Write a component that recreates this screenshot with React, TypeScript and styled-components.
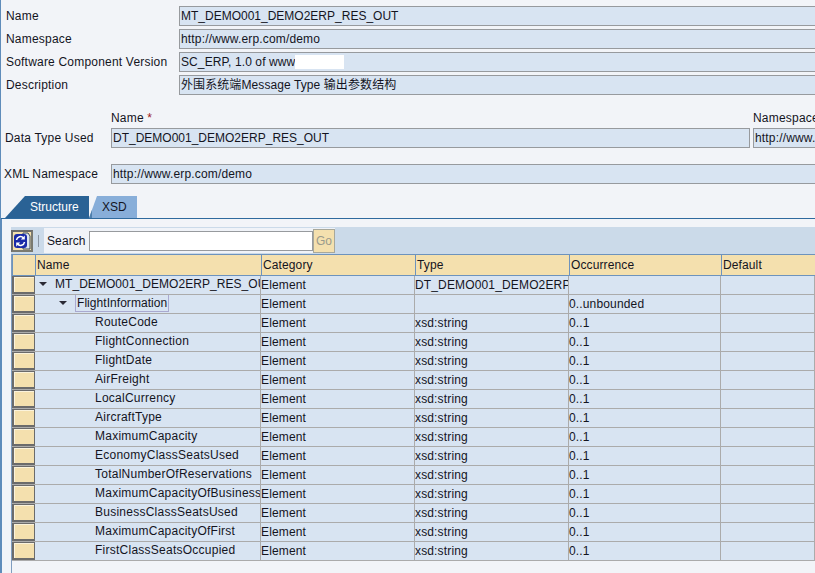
import React from "react";
import styled, { createGlobalStyle } from "styled-components";

const Global = createGlobalStyle`
  html, body { margin: 0; padding: 0; background: #f2f4f8; overflow: hidden; }
  body { font-family: "Liberation Sans", Arial, "Noto Sans CJK SC", sans-serif; font-size: 12px; color: #14141e; }
`;
const Page = styled.div`
  width: 815px; height: 573px; overflow: hidden; box-sizing: border-box;
  border-left: 1px solid #5f8cba; background: #f2f4f8;
`;
const Form = styled.section`
  display: flex; flex-direction: column; padding-top: 6px; gap: 3px;
`;
const Row = styled.div<{ $label: number }>`
  display: grid; grid-template-columns: ${(p) => p.$label}px 1fr; align-items: center; height: 20px;
`;
const Label = styled.div<{ $pad?: number }>`
  padding-left: ${(p) => p.$pad ?? 5}px; letter-spacing: 0.2px; white-space: nowrap;
`;
const Field = styled.div<{ $w?: number; $track?: number }>`
  box-sizing: border-box; height: 20px; line-height: 18px; padding-left: 1px;
  border: 1px solid #979a9e; border-right: ${(p) => (p.$w ? "1px solid #979a9e" : "none")};
  width: ${(p) => (p.$w ? `${p.$w}px` : "auto")}; flex: none;
  background: #d8e4f2; letter-spacing: ${(p) => p.$track ?? 0}px; white-space: nowrap; overflow: hidden;
`;
const Masked = styled.span`
  display: inline-block; width: 49px; height: 14px; background: #fff; vertical-align: middle; margin-top: -2px;
`;
const Heads = styled.div`
  display: grid; grid-template-columns: 642px 1fr; height: 20px; margin-top: 13px; padding-left: 110px; align-items: center;
`;
const HeadText = styled.div`
  letter-spacing: 0.2px; white-space: nowrap;
`;
const Star = styled.span`color: #a02020;`;
const UsedFields = styled.div`
  display: flex; gap: 3px; overflow: hidden;
`;
const XmlRow = styled(Row)`margin-top: 16px;`;
const Strip = styled.nav`
  display: flex; height: 22px; margin-top: 12px; padding-left: 4px; border-bottom: 1px solid #2f6a9e;
`;
const Tab = styled.div<{ $active?: boolean }>`
  box-sizing: border-box; height: 22px; display: flex; align-items: center;
  ${(p) =>
    p.$active
      ? `width: 84px; padding-left: 25px; background: #2a6295; color: #fff; clip-path: polygon(0 100%, 20px 0, 100% 0, 100% 100%);`
      : `width: 48px; padding-left: 13px; color: #14141e;
         background: linear-gradient(#4f80ad, #4f80ad) no-repeat left bottom / 3px 9px, #88aed9;
         clip-path: polygon(0 100%, 8px 0, 100% 0, 100% 100%);`}
`;
const Panel = styled.section`
  border-left: 1px solid #5f8cba; padding: 8px 0 0 9px;
`;
const Toolbar = styled.div`
  height: 27px; box-sizing: border-box; background: #cbdae9; display: flex; align-items: center;
`;
const IconButton = styled.button`
  box-sizing: border-box; width: 22px; height: 22px; padding: 0; margin: 0; display: flex; align-items: center; justify-content: center;
  background: #f4e0ae; border: 2px solid #6b6b6b; border-right-color: #7a7a70; border-bottom-color: #7a7a70;
`;
const Sep = styled.div`
  width: 1px; height: 12px; background: #8a96a4; margin: 0 5px;
`;
const SearchBox = styled.div`
  display: flex; align-items: center; height: 25px; background: #f0f3f8; padding-left: 3px;
`;
const SearchLabel = styled.span`
  letter-spacing: 0.1px; width: 42px;
`;
const SearchInput = styled.div`
  box-sizing: border-box; width: 224px; height: 20px; background: #fff; border: 1px solid #979a9e;
`;
const GoButton = styled.button`
  box-sizing: border-box; width: 22px; height: 24px; padding: 0; background: #f4e0ae; border: 1px solid #a8a89a;
  color: #9a9a8c; font: 12px "Liberation Sans", Arial, sans-serif;
`;
const columns = "23px 226px 154px 154px 152px 94px";
const TableGrid = styled.div`
  border-left: 1px solid #7f9dbf; display: flex; flex-direction: column; height: 320px;
`;
const HeaderRow = styled.div`
  display: grid; grid-template-columns: ${columns}; height: 22px; flex: none; box-sizing: border-box; border-bottom: 1px solid #6d93bd;
`;
const HeaderCell = styled.div`
  box-sizing: border-box; background: #f4e0ae; border-left: 1px solid #6d93bd; border-top: 1px solid #6d93bd;
  padding-left: 1px; line-height: 20px; letter-spacing: 0.12px; white-space: nowrap;
`;
const BodyRow = styled.div`
  display: grid; grid-template-columns: ${columns}; height: 19px; flex: none; box-sizing: border-box;
  background: #d8e4f2; border-bottom: 1px solid #ababab;
`;
const SelectCell = styled.div`
  box-sizing: border-box; height: 18px; width: 23px; background: #f4e0ae;
  border: 1px solid #6b6b6b; border-left-width: 2px; border-bottom-width: 2px;
  box-shadow: inset 1px 1px 0 #fbf3dc;
`;
const Cell = styled.div`
  box-sizing: border-box; border-right: 1px solid #ababab; line-height: 18px;
  letter-spacing: 0.15px; white-space: nowrap; overflow: hidden;
`;
const NameCell = styled(Cell)<{ $depth: number }>`
  display: flex; align-items: center; padding-bottom: 2px;
  letter-spacing: ${(p) => (p.$depth === 2 ? 0.25 : 0.05)}px;
  padding-left: ${(p) => (p.$depth === 0 ? 4 : p.$depth === 1 ? 24 : 60)}px;
`;
const Twist = styled.span`
  flex: none; width: 0; height: 0; margin-right: 8px;
  border-left: 4px solid transparent; border-right: 4px solid transparent; border-top: 4px solid #2a2a35;
`;
const Focus = styled.span`
  box-sizing: border-box; height: 18px; line-height: 16px; padding: 0 1px; border: 1px solid #a9a9d0;
`;

const fields = [
  "RouteCode", "FlightConnection", "FlightDate", "AirFreight", "LocalCurrency", "AircraftType",
  "MaximumCapacity", "EconomyClassSeatsUsed", "TotalNumberOfReservations", "MaximumCapacityOfBusiness",
  "BusinessClassSeatsUsed", "MaximumCapacityOfFirst", "FirstClassSeatsOccupied",
];

const RefreshIcon = () => (
  <svg width="18" height="18" viewBox="0 0 18 18">
    <path d="M10 1h5l2 3v13H10z" fill="#dfe6ee" stroke="#3c4a5c" strokeWidth="1" />
    <rect x="1" y="2" width="13" height="14" rx="3" fill="#1a2aa8" />
    <path d="M3.5 8a4 4 0 0 1 7-2" fill="none" stroke="#fff" strokeWidth="1.6" />
    <path d="M11.8 3.5v4h-4z" fill="#fff" />
    <path d="M11.5 10a4 4 0 0 1-7 2" fill="none" stroke="#fff" strokeWidth="1.6" />
    <path d="M3.2 14.5v-4h4z" fill="#fff" />
  </svg>
);

export default function App() {
  return (
    <Page>
      <Global />
      <Form>
        <Row $label={178}><Label>Name</Label><Field>MT_DEMO001_DEMO2ERP_RES_OUT</Field></Row>
        <Row $label={178}><Label>Namespace</Label><Field $track={0.16}>http://www.erp.com/demo</Field></Row>
        <Row $label={178}><Label>Software Component Version</Label><Field $track={0.1}>SC_ERP, 1.0 of www<Masked /></Field></Row>
        <Row $label={178}><Label>Description</Label><Field $track={0.09}>外围系统端Message Type 输出参数结构</Field></Row>
      </Form>
      <Heads>
        <HeadText>Name <Star>*</Star></HeadText>
        <HeadText>Namespace</HeadText>
      </Heads>
      <Row $label={110}>
        <Label $pad={4}>Data Type Used</Label>
        <UsedFields>
          <Field $w={639}>DT_DEMO001_DEMO2ERP_RES_OUT</Field>
          <Field $track={0.16}>http://www.erp.com/demo</Field>
        </UsedFields>
      </Row>
      <XmlRow $label={110}>
        <Label $pad={3}>XML Namespace</Label>
        <Field $track={0.16}>http://www.erp.com/demo</Field>
      </XmlRow>
      <Strip>
        <Tab $active>Structure</Tab>
        <Tab>XSD</Tab>
      </Strip>
      <Panel>
        <Toolbar>
          <IconButton aria-label="Refresh"><RefreshIcon /></IconButton>
          <Sep />
          <SearchBox>
            <SearchLabel>Search</SearchLabel>
            <SearchInput />
            <GoButton>Go</GoButton>
          </SearchBox>
        </Toolbar>
        <TableGrid>
          <HeaderRow>
            <HeaderCell />
            <HeaderCell>Name</HeaderCell>
            <HeaderCell>Category</HeaderCell>
            <HeaderCell>Type</HeaderCell>
            <HeaderCell>Occurrence</HeaderCell>
            <HeaderCell>Default</HeaderCell>
          </HeaderRow>
          <BodyRow>
            <SelectCell />
            <NameCell $depth={0}><Twist />MT_DEMO001_DEMO2ERP_RES_OUT</NameCell>
            <Cell>Element</Cell>
            <Cell>DT_DEMO001_DEMO2ERP_RES_OUT</Cell>
            <Cell />
            <Cell />
          </BodyRow>
          <BodyRow>
            <SelectCell />
            <NameCell $depth={1}><Twist /><Focus>FlightInformation</Focus></NameCell>
            <Cell>Element</Cell>
            <Cell />
            <Cell>0..unbounded</Cell>
            <Cell />
          </BodyRow>
          {fields.map((f) => (
            <BodyRow key={f}>
              <SelectCell />
              <NameCell $depth={2}>{f}</NameCell>
              <Cell>Element</Cell>
              <Cell>xsd:string</Cell>
              <Cell>0..1</Cell>
              <Cell />
            </BodyRow>
          ))}
        </TableGrid>
      </Panel>
    </Page>
  );
}
